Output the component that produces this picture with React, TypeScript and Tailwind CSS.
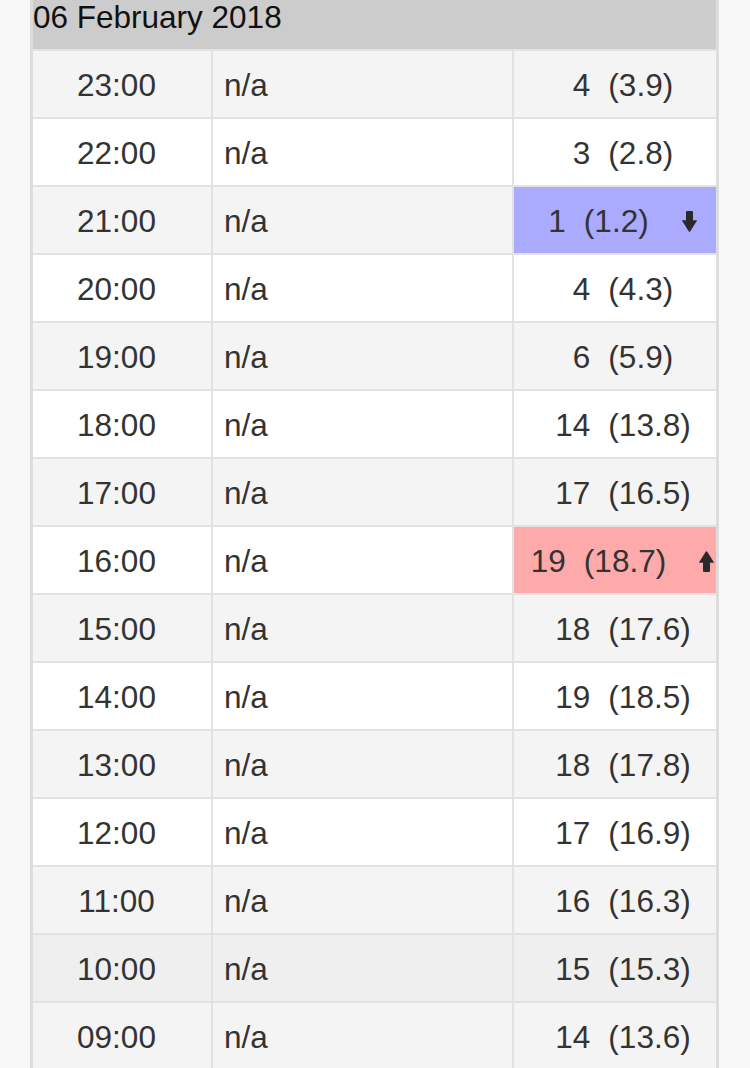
import React from "react";

// Hourly readings for one day, newest hour first. Min/max of the day get a tint + arrow.

type Reading = {
  time: string;
  value: number;
  avg: string;
  mark?: "min" | "max";
};

const readings: Reading[] = [
  { time: "23:00", value: 4, avg: "3.9" },
  { time: "22:00", value: 3, avg: "2.8" },
  { time: "21:00", value: 1, avg: "1.2", mark: "min" },
  { time: "20:00", value: 4, avg: "4.3" },
  { time: "19:00", value: 6, avg: "5.9" },
  { time: "18:00", value: 14, avg: "13.8" },
  { time: "17:00", value: 17, avg: "16.5" },
  { time: "16:00", value: 19, avg: "18.7", mark: "max" },
  { time: "15:00", value: 18, avg: "17.6" },
  { time: "14:00", value: 19, avg: "18.5" },
  { time: "13:00", value: 18, avg: "17.8" },
  { time: "12:00", value: 17, avg: "16.9" },
  { time: "11:00", value: 16, avg: "16.3" },
  { time: "10:00", value: 15, avg: "15.3" },
  { time: "09:00", value: 14, avg: "13.6" },
];

// the 10:00 row is the one under the pointer in the screenshot
const HOVERED = "10:00";

function Arrow({ up }: { up?: boolean }) {
  return (
    <svg
      width="17"
      height="21"
      viewBox="0 0 17 21"
      className={up ? "rotate-180" : ""}
      fill="#2a2a2a"
    >
      <rect x="5" y="0" width="7" height="10" rx="1" />
      <path d="M0.8 9.2 H16.2 L9.3 20.2 Q8.5 21.2 7.7 20.2 Z" />
    </svg>
  );
}

export default function App() {
  return (
    <div
      className="min-h-screen bg-[#f8f8f8] pl-[30px] text-[#333] text-[31.5px]"
      style={{ fontFamily: '"Liberation Sans", Arial, sans-serif' }}
    >
      <div className="w-[689px] border-x-[3px] border-[#dddddd]">
        <div className="h-[51px] border-b-2 border-[#e2e2e2] bg-[#cccccc] pt-[2px] leading-none text-[#111]">
          06 February 2018
        </div>
        {readings.map((r, i) => {
          const rowBg =
            r.time === HOVERED
              ? "bg-[#efefef]"
              : i % 2 === 0
                ? "bg-[#f4f4f4]"
                : "bg-white";
          const cellBg =
            r.mark === "min"
              ? "bg-[#aaaaff]"
              : r.mark === "max"
                ? "bg-[#ffaaaa]"
                : "";
          return (
            <div
              key={r.time}
              className={"flex h-[68px] border-b-2 border-[#e2e2e2] " + rowBg}
            >
              <div className="flex w-[180px] shrink-0 items-center justify-center border-r-2 border-[#e2e2e2] pt-[3px] pr-[11px]">
                {r.time}
              </div>
              <div className="flex w-[301px] shrink-0 items-center border-r-2 border-[#e2e2e2] pt-[3px] pl-[11px]">
                n/a
              </div>
              <div
                className={
                  "flex w-[202px] shrink-0 items-center justify-center overflow-hidden pt-[3px] pl-4 " +
                  cellBg
                }
              >
                <span>{r.value}</span>
                <span className="ml-[18px]">({r.avg})</span>
                {r.mark && (
                  <span className="ml-8 flex">
                    <Arrow up={r.mark === "max"} />
                  </span>
                )}
              </div>
            </div>
          );
        })}
      </div>
    </div>
  );
}
